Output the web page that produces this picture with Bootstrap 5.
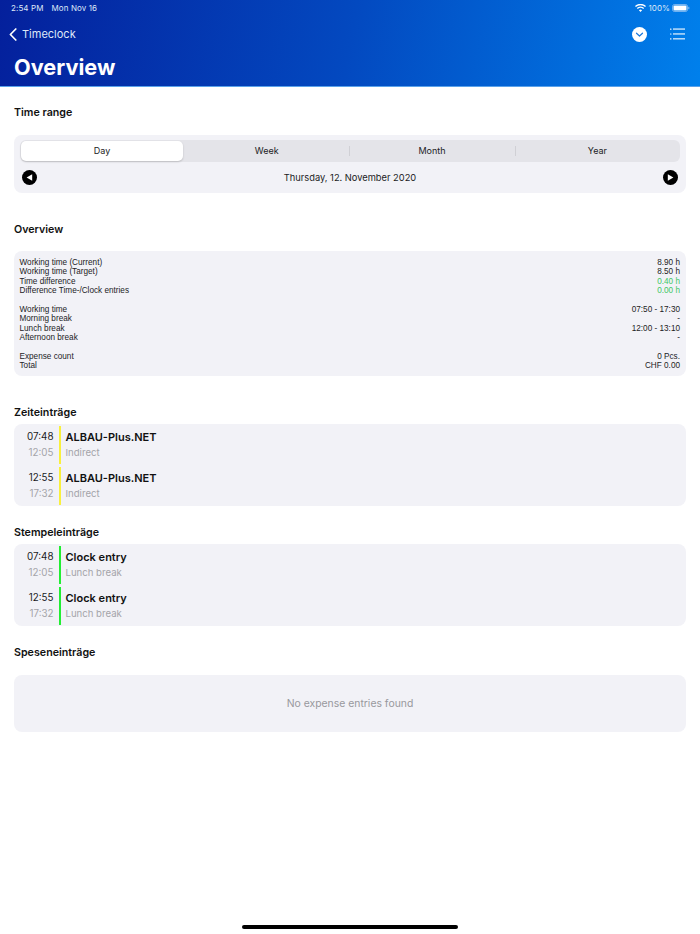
<!DOCTYPE html>
<html lang="en"><head><meta charset="utf-8">
<title>Overview</title>
<link rel="stylesheet" href="https://cdn.jsdelivr.net/npm/bootstrap@5.3.0/dist/css/bootstrap.min.css">
<style>
html,body{height:934px;overflow:hidden;background:#fff}
body{font-family:Inter,"Liberation Sans",sans-serif;color:#000;position:relative}
.hdr{height:87px;background:linear-gradient(100deg,#04209c 0%,#0349c0 50%,#0080ec 100%);border-bottom:1px solid #5aa2ea;color:#fff}
.stat{height:16px;padding:0 10px 0 11px;font-size:8px;letter-spacing:.1px;color:#dfe8f8}
.navrow{height:36px;padding:0 15px 0 9px}
.back{font-size:11px;color:#dfe8f8;gap:5px}
.ttl{font-size:21.7px;font-weight:700;line-height:28px;padding-left:14px;margin:1px 0 0}
.sec{font-size:10.7px;font-weight:600;line-height:14px;margin:0 14px;color:#111}
.pane{background:#f2f2f7;border-radius:8px;margin:0 14px}
.seg{display:flex;background:#e4e4e9;border-radius:6px;height:22px;margin:0 6px;padding:1px 0 1px 1px}
.seg>div{flex:1;display:flex;align-items:center;justify-content:center;font-size:9px;font-weight:400;position:relative;color:#1c1c1e}
.seg>.on{flex:0 0 162px;margin-right:1px;background:#fff;border-radius:5px;box-shadow:0 1px 2px rgba(0,0,0,.18)}
.sep:after{content:"";position:absolute;left:0;top:5px;bottom:5px;width:1px;background:#d0d0d5}
.daterow{height:31px;padding:0 8px;font-size:9.3px;color:#1c1c1e}
.info{height:125px;padding:7px 6px 0 5.5px;font:8.2px/9.4px "Liberation Sans",sans-serif;color:#1c1c1e}
.info .ln{height:9.4px;display:flex;justify-content:space-between}
.gp{height:9.4px}
.gr{color:#3ec764}
.ent{display:flex;height:38px;margin-bottom:3px}
.ent:last-child{margin-bottom:0}
.tm{width:39.5px;text-align:right;font-size:9.8px;line-height:15.5px;padding-top:3px;color:#1c1c1e}
.tm span{display:block;color:#a4a4a9}
.bar{width:2px;margin:0 5px}
.by{background:#f9f03c}.bg2{background:#22ee33}
.tx{font-size:11px;font-weight:600;line-height:16px;padding-top:2.5px;color:#111}
.tx span{display:block;font-size:9.6px;font-weight:400;color:#a4a4a9}
.list{padding:2px 0 1px}
.empty{height:57px;font-size:10.4px;color:#98989d}
.home{position:absolute;left:242px;top:925px;width:216px;height:4px;border-radius:2px;background:#000}
.h1gap{margin-top:19px}.p1gap{margin-top:15px}.h2gap{margin-top:30px}.p2gap{margin-top:14px}.p3gap{margin-top:4px}.h4gap{margin-top:20px}.p4gap{margin-top:4px}.h5gap{margin-top:20px}.p5gap{margin-top:15px}
</style></head><body>
<div class="hdr">
 <div class="stat d-flex justify-content-between align-items-center">
  <div class="d-flex" style="gap:8px"><span>2:54 PM</span><span>Mon Nov 16</span></div>
  <div class="d-flex align-items-center" style="gap:2px">
   <svg width="11" height="8" viewBox="0 0 11 8"><path d="M5.5 8 3.9 6.2a2.3 2.3 0 0 1 3.2 0zM2.8 5 1.8 3.9a5.3 5.3 0 0 1 7.4 0L8.2 5a3.9 3.9 0 0 0-5.4 0zM.9 3 0 2a8 8 0 0 1 11 0l-.9 1a6.7 6.7 0 0 0-9.2 0z" fill="#fff"/></svg>
   <span>100%</span>
   <svg width="18" height="8" viewBox="0 0 18 8"><rect x=".5" y=".5" width="15" height="7" rx="2" fill="none" stroke="#dfe8f8" stroke-opacity=".5"/><rect x="1.5" y="1.5" width="13" height="5" rx="1" fill="#fff"/><rect x="16.3" y="2.8" width="1" height="2.4" fill="#dfe8f8" opacity=".6"/></svg>
  </div>
 </div>
 <div class="navrow d-flex justify-content-between align-items-center">
  <div class="back d-flex align-items-center">
   <svg width="8" height="13" viewBox="0 0 8 13"><path d="M6.8 1 1.4 6.5l5.4 5.5" fill="none" stroke="#fff" stroke-width="1.7" stroke-linecap="round" stroke-linejoin="round"/></svg>
   <span>Timeclock</span>
  </div>
  <div class="d-flex align-items-center" style="gap:23px">
   <svg width="15" height="15" viewBox="0 0 15 15"><circle cx="7.5" cy="7.5" r="7.5" fill="#fff"/><path d="M4.5 6.2 7.5 9l3-2.8" fill="none" stroke="#1a78dc" stroke-width="1.2" stroke-linecap="round" stroke-linejoin="round"/></svg>
   <svg width="15" height="12" viewBox="0 0 15 12"><g fill="#fff"><rect x="0" y="0.5" width="1.5" height="1.2" rx=".5"/><rect x="0" y="5.4" width="1.5" height="1.2" rx=".5"/><rect x="0" y="10.3" width="1.5" height="1.2" rx=".5"/><rect x="3" y="0.5" width="12" height="1.1"/><rect x="3" y="5.4" width="12" height="1.1"/><rect x="3" y="10.3" width="12" height="1.1"/></g></svg>
  </div>
 </div>
 <h1 class="ttl">Overview</h1>
</div>

<div class="sec h1gap">Time range</div>
<div class="pane p1gap" style="padding-top:5px;height:58px">
 <div class="seg">
  <div class="on">Day</div><div>Week</div><div class="sep">Month</div><div class="sep">Year</div>
 </div>
 <div class="daterow d-flex justify-content-between align-items-center">
  <svg width="15" height="15" viewBox="0 0 15 15"><circle cx="7.5" cy="7.5" r="7.5" fill="#000"/><path d="M10.2 4.3v6.4L4.6 7.5z" fill="#fff"/></svg>
  <span>Thursday, 12. November 2020</span>
  <svg width="15" height="15" viewBox="0 0 15 15"><circle cx="7.5" cy="7.5" r="7.5" fill="#000"/><path d="M4.8 4.3v6.4l5.6-3.2z" fill="#fff"/></svg>
 </div>
</div>

<div class="sec h2gap">Overview</div>
<div class="pane info p2gap">
 <div class="ln"><span>Working time (Current)</span><span>8.90 h</span></div>
 <div class="ln"><span>Working time (Target)</span><span>8.50 h</span></div>
 <div class="ln"><span>Time difference</span><span class="gr">0.40 h</span></div>
 <div class="ln"><span>Difference Time-/Clock entries</span><span class="gr">0.00 h</span></div>
 <div class="gp"></div>
 <div class="ln"><span>Working time</span><span>07:50 - 17:30</span></div>
 <div class="ln"><span>Morning break</span><span>-</span></div>
 <div class="ln"><span>Lunch break</span><span>12:00 - 13:10</span></div>
 <div class="ln"><span>Afternoon break</span><span>-</span></div>
 <div class="gp"></div>
 <div class="ln"><span>Expense count</span><span>0 Pcs.</span></div>
 <div class="ln"><span>Total</span><span>CHF 0.00</span></div>
</div>

<div class="sec h2gap">Zeiteinträge</div>
<div class="pane list p3gap">
 <div class="ent"><div class="tm">07:48<span>12:05</span></div><div class="bar by"></div><div class="tx">ALBAU-Plus.NET<span>Indirect</span></div></div>
 <div class="ent"><div class="tm">12:55<span>17:32</span></div><div class="bar by"></div><div class="tx">ALBAU-Plus.NET<span>Indirect</span></div></div>
</div>

<div class="sec h4gap">Stempeleinträge</div>
<div class="pane list p4gap">
 <div class="ent"><div class="tm">07:48<span>12:05</span></div><div class="bar bg2"></div><div class="tx">Clock entry<span>Lunch break</span></div></div>
 <div class="ent"><div class="tm">12:55<span>17:32</span></div><div class="bar bg2"></div><div class="tx">Clock entry<span>Lunch break</span></div></div>
</div>

<div class="sec h5gap">Speseneinträge</div>
<div class="pane empty d-flex align-items-center justify-content-center p5gap">No expense entries found</div>
<div class="home"></div>
<script src="https://cdn.jsdelivr.net/npm/bootstrap@5.3.0/dist/js/bootstrap.bundle.min.js"></script>
</body></html>
